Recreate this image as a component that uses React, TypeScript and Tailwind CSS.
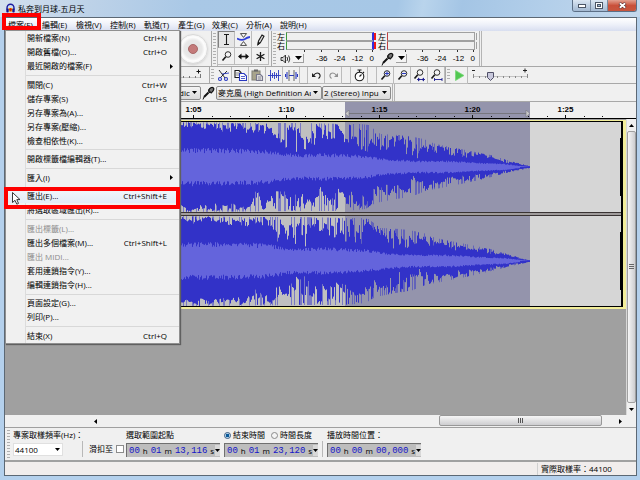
import React, { useState } from 'react';
import { clsx } from 'clsx';

type MenuEntry = { label: string; shortcut?: string; sub?: boolean; disabled?: boolean; active?: boolean } | null;

const menuBar = ['檔案(F)', '編輯(E)', '檢視(V)', '控制(R)', '軌道(T)', '產生(G)', '效果(C)', '分析(A)', '說明(H)'];

// null = separator
const fileMenu: MenuEntry[] = [
  { label: '開新檔案(N)', shortcut: 'Ctrl+N' },
  { label: '開啟舊檔(O)...', shortcut: 'Ctrl+O' },
  { label: '最近開啟的檔案(F)', sub: true },
  null,
  { label: '關閉(C)', shortcut: 'Ctrl+W' },
  { label: '儲存專案(S)', shortcut: 'Ctrl+S' },
  { label: '另存專案為(A)...' },
  { label: '另存專案(壓縮)...' },
  { label: '檢查相依性(K)...' },
  null,
  { label: '開啟標籤檔編輯器(T)...' },
  null,
  { label: '匯入(I)', sub: true },
  null,
  { label: '匯出(E)...', shortcut: 'Ctrl+Shift+E', active: true },
  { label: '將選取區域匯出(R)...' },
  null,
  { label: '匯出標籤(L)...', disabled: true },
  { label: '匯出多個檔案(M)...', shortcut: 'Ctrl+Shift+L' },
  { label: '匯出 MIDI...', disabled: true },
  { label: '套用連鎖指令(Y)...' },
  { label: '編輯連鎖指令(H)...' },
  null,
  { label: '頁面設定(G)...' },
  { label: '列印(P)...' },
  null,
  { label: '結束(X)', shortcut: 'Ctrl+Q' },
];

/* ---------- waveform ---------- */

type Points = [number, number][];

const upper: Points = [[0, 45], [60, 44], [120, 44], [165, 43], [180, 43], [188, 42], [200, 33], [218, 32], [228, 31], [243, 28], [255, 23], [285, 17], [310, 12], [330, 6], [345, 2], [350, 1]];
const lower: Points = [[0, 45], [130, 44], [165, 44], [185, 42], [195, 36], [215, 32], [230, 30], [245, 24], [265, 20], [290, 15], [315, 9], [335, 4], [350, 1]];
const upDips: Points = [[0, 0.16], [60, 0.22], [90, 0.3], [98, 0.6], [110, 0.55], [120, 0.75], [130, 0.65], [138, 0.35], [165, 0.55], [190, 0.65], [205, 0.5], [215, 0.65], [240, 0.75], [250, 0.45], [300, 0.45], [350, 0.4]];
const downDips: Points = [[0, 0.16], [65, 0.2], [74, 0.6], [84, 0.2], [95, 0.5], [108, 0.45], [118, 0.75], [128, 0.6], [165, 0.5], [182, 0.35], [195, 0.6], [240, 0.7], [260, 0.5], [350, 0.4]];
const rms: Points = [[0, 18], [70, 17], [90, 16], [105, 13], [125, 12], [140, 13], [165, 12], [185, 11], [205, 8], [235, 6], [270, 6], [300, 4], [325, 3], [340, 1], [350, 0]];

const at = (pts: Points, x: number) => {
  for (let i = 1; i < pts.length; i++) {
    const [x1, y1] = pts[i];
    const [x0, y0] = pts[i - 1];
    if (x <= x1) return y0 + ((y1 - y0) * (x - x0)) / (x1 - x0);
  }
  return pts[pts.length - 1][1];
};

const buildWave = (seed: number) => {
  let s = seed;
  const rnd = () => {
    s = (s * 16807) % 2147483647;
    return s / 2147483647;
  };
  let peak = '';
  let soft = '';
  let body = '';
  let a = 0.5;
  let b = 0.5;
  for (let x = 0; x < 350; x++) {
    // neighbouring columns partly share their level, so peaks come in clusters
    a = rnd() > 0.45 ? rnd() : a * 0.8 + rnd() * 0.2;
    b = rnd() > 0.45 ? rnd() : b * 0.8 + rnd() * 0.2;
    const u = at(upper, x);
    const l = at(lower, x);
    const up = u * (1 - at(upDips, x) * Math.pow(a, 1.3));
    const down = l * (1 - at(downDips, x) * Math.pow(b, 1.1));
    const r = at(rms, x);
    const px = x + 0.5;
    peak += `M${px} ${(45 - up).toFixed(1)}V${(45 + down).toFixed(1)}`;
    if (rnd() > 0.75) soft += `M${px} ${(45 - u).toFixed(1)}V${(45 + l).toFixed(1)}`;
    body += `M${px} ${(45 - r * (0.78 + rnd() * 0.3)).toFixed(1)}V${(45 + r * (0.78 + rnd() * 0.3)).toFixed(1)}`;
  }
  return { peak, soft, body };
};

const waves = [buildWave(4211), buildWave(90731)];

const Channel = ({ index }: { index: number }) => (
  <div className="flex h-[90px] bg-[#d6d6d6]">
    <div className="w-[175px] shrink-0 bg-[#c0c0c0]" />
    <svg width="350" height="90" viewBox="0 0 350 90" className="shrink-0" aria-hidden="true">
      <rect width="165" height="90" fill="#c0c0c0" />
      <rect x="165" width="185" height="90" fill="#9494ac" />
      <path d={waves[index].soft} stroke="#3232c8" strokeOpacity="0.5" />
      <path d={waves[index].peak} stroke="#3232c8" />
      <path d={waves[index].body} stroke="#6464dc" />
      <path d="M340 45.5H350" stroke="#3232c8" />
    </svg>
    <div className="flex flex-1 items-center justify-end">
      <div className="h-[58px] w-px bg-black" />
    </div>
  </div>
);

/* ---------- small parts ---------- */

const Grip = () => (
  <div className="flex w-[6px] shrink-0 flex-col items-center self-stretch border-l border-[#a8a8a8] bg-[#f0f0f0] py-[2px]">
    <div className="w-[3px] flex-1 bg-[repeating-linear-gradient(to_bottom,#b0b0b0_0_1px,#f0f0f0_1px_3px)]" />
  </div>
);

const Arrow = ({ className }: { className?: string }) => (
  <svg width="5" height="3" viewBox="0 0 5 3" className={className} aria-hidden="true">
    <path d="M0 0H5L2.5 3Z" fill="#000" />
  </svg>
);

const ToolButton = ({ label, active, children }: { label: string; active?: boolean; children: React.ReactNode }) => (
  <button
    aria-label={label}
    className={clsx(
      'flex h-[17px] w-[17px] shrink-0 items-center justify-center border-r border-b border-[#bcbcbc]',
      active ? 'border-t border-l border-t-[#808080] border-l-[#808080] bg-[#e6e6e6]' : 'bg-[#f1f1f1]',
    )}
  >
    <svg width="13" height="13" viewBox="0 0 13 13" fill="none" stroke="#1a1a1a" strokeWidth="1.1" className="shrink-0">
      {children}
    </svg>
  </button>
);

const Lens = () => (
  <>
    <circle cx="8" cy="4.5" r="2.8" fill="#f4f4f4" strokeWidth="0.9" />
    <path d="M5.8 6.8L2.5 10.5" strokeWidth="1.7" />
  </>
);

const MicIcon = () => (
  <svg width="13" height="14" viewBox="0 0 13 14" fill="none" stroke="#111" className="shrink-0" aria-hidden="true">
    <ellipse cx="9.2" cy="4" rx="2" ry="3" transform="rotate(40 9.2 4)" fill="#777" strokeWidth="1.2" />
    <path d="M6 3.6L10 7.4" strokeWidth="1" />
    <path d="M6.5 6.5L2 11" strokeWidth="2" />
    <path d="M2 11L1 13.5" strokeWidth="1" />
  </svg>
);

const Meter = ({ kind }: { kind: 'play' | 'record' }) => (
  <div className="flex w-[101px] shrink-0 flex-col pt-[1px]">
    <div className="flex">
      <p className="w-[9px] text-[8px] leading-[9px]">
        左
        <br />
        右
      </p>
      <div>
        {[0, 1].map((row) => (
          <div key={row} className="flex h-[9px] items-center">
            <div
              className={clsx(
                'h-[9px] w-[88px] border-t border-b border-l border-[#a0a0a0] bg-[#efefef]',
                kind === 'play' ? 'border-r-2 border-l-[#3c9a3c] border-r-[#3030e0]' : 'border-r border-l-[#c04040]',
              )}
            />
            {kind === 'play' ? <div className="h-[7px] w-[2px] bg-[#f01818]" /> : <div className="h-[7px] w-[2px] border-r border-[#a0a0a0]" />}
          </div>
        ))}
      </div>
    </div>
    <svg width="100" height="2" viewBox="0 0 100 2" aria-hidden="true">
      <path d="M27.5 0V2M44.5 0V2M61.5 0V2M79.5 0V2M95.5 0V2" stroke="#333" />
    </svg>
    <div className="flex h-[13px] items-center pr-[4px] pl-[3px]">
      {kind === 'play' ? (
        <svg width="11" height="10" viewBox="0 0 11 10" fill="none" stroke="#333" strokeWidth="1" aria-hidden="true">
          <path d="M1 3.5H3L5.5 1V9L3 6.5H1Z" fill="#ccc" />
          <path d="M7 3Q8.3 5 7 7M8.6 1.5Q11 5 8.6 8.5" />
        </svg>
      ) : (
        <MicIcon />
      )}
      <button
        aria-label={kind === 'play' ? '輸出音量表' : '輸入音量表'}
        className="ml-[2px] flex h-[9px] w-[11px] items-center justify-center border-r border-b border-[#a0a0a0] bg-[#f4f4f4]"
      >
        <svg width="7" height="4" viewBox="0 0 7 4">
          <path d="M0 0H7L3.5 4Z" fill="#000" />
        </svg>
      </button>
      <div className="ml-auto flex w-[58px] justify-between font-['Liberation_Sans',sans-serif] text-[8px] leading-[10px]">
        <span>-36</span>
        <span>-24</span>
        <span>-12</span>
        <span>0</span>
      </div>
    </div>
  </div>
);

const Combo = ({ label, value, className }: { label: string; value: string; className: string }) => (
  <div className={clsx('relative flex h-[14px] shrink-0 items-center', className)}>
    <select
      aria-label={label}
      className="h-full w-full appearance-none overflow-hidden rounded-[2px] border border-[#8c8c8c] bg-linear-to-b from-[#f4f4f4] to-[#dadada] pr-[10px] pl-[1px] text-[8px] leading-[12px] text-black"
    >
      <option>{value}</option>
    </select>
    <Arrow className="pointer-events-none absolute right-[4px]" />
  </div>
);

const TimeBox = ({ h, m, s, label }: { h: string; m: string; s: string; label: string }) => (
  <div
    role="group"
    aria-label={label}
    className="flex h-[14px] w-[94px] items-center border-t border-l border-[#707070] bg-[#bdbdbd] pl-[2px] text-[8px] leading-[12px]"
  >
    <div className="flex items-center gap-[3px]">
      <span className="font-['Liberation_Mono',monospace] text-[9px] text-[#1414c8]">{h}</span>
      <span>h</span>
      <span className="font-['Liberation_Mono',monospace] text-[9px] text-[#1414c8]">{m}</span>
      <span>m</span>
      <span className="font-['Liberation_Mono',monospace] text-[9px] text-[#1414c8]">{s}</span>
      <span>s</span>
    </div>
    <button aria-label={label + ' 格式'} className="ml-auto flex h-[11px] w-[5px] shrink-0 items-center justify-center bg-[#d8d8d8]">
      <Arrow />
    </button>
  </div>
);

/* ---------- window sections ---------- */

const TitleBar = () => (
  <header className="flex h-[17px] items-start bg-[linear-gradient(100deg,#d3e0ee_0%,#bdd2e8_14%,#a9c8e6_30%,#a6c7e6_62%,#b9d4ec_66%,#a4c5e5_72%,#b3cfea_85%,#c4d8ec_100%)] pr-[3px] pl-[6px]">
    <svg width="9" height="11" viewBox="0 0 9 11" className="mt-[3px]" aria-hidden="true">
      <path d="M1 6.5V5A3.5 3.8 0 0 1 8 5V6.5" fill="none" stroke="#1a1aa0" strokeWidth="1.4" />
      <rect x="2.6" y="5" width="3.8" height="3.6" fill="#f39a12" />
      <path d="M3 6.5L4.5 5L6 6.5L4.5 8.4Z" fill="#d02000" />
      <rect x="0.3" y="5.4" width="2.4" height="4.2" rx="1" fill="#15158c" />
      <rect x="6.3" y="5.4" width="2.4" height="4.2" rx="1" fill="#15158c" />
    </svg>
    <h1 className="ml-[3px] flex-1 text-[8px] leading-[17px]">私奔到月球-五月天</h1>
    <div className="flex h-[12px] overflow-hidden rounded-b-[3px] border border-t-0 border-[#5c6f86]">
      <button aria-label="最小化" className="flex w-[18px] items-center justify-center border-r border-[#7a8ca2] bg-linear-to-b from-[#dbe6f2] to-[#a3b9d2]">
        <svg width="8" height="5" viewBox="0 0 8 5">
          <rect x="0.5" y="1.5" width="7" height="3" fill="#fff" stroke="#4c5666" />
        </svg>
      </button>
      <button aria-label="最大化" className="flex w-[17px] items-center justify-center border-r border-[#7a8ca2] bg-linear-to-b from-[#dbe6f2] to-[#a3b9d2]">
        <svg width="8" height="7" viewBox="0 0 8 7">
          <rect x="0.5" y="0.5" width="7" height="6" fill="#fff" stroke="#4c5666" />
          <rect x="2.5" y="2.5" width="3" height="2" fill="#a3b9d2" stroke="#4c5666" />
        </svg>
      </button>
      <button aria-label="關閉" className="flex w-[28px] items-center justify-center bg-linear-to-b from-[#e2a090] via-[#c9503a] to-[#c8563e]">
        <svg width="9" height="7" viewBox="0 0 9 7">
          <path d="M1.5 1L7.5 6M7.5 1L1.5 6" stroke="#5a2a2a" strokeWidth="3" />
          <path d="M1.8 1.2L7.2 5.8M7.2 1.2L1.8 5.8" stroke="#fff" strokeWidth="1.8" />
        </svg>
      </button>
    </div>
  </header>
);

const ToolBars = () => (
  <>
    {/* Transport, tools, meters */}
    <div className="flex h-[36px] border-b border-[#a8a8a8]">
      <div className="flex w-[206px] shrink-0 items-center justify-end pr-[3px]">
        <button aria-label="錄音" className="flex h-[30px] w-[30px] items-center justify-center rounded-full border border-[#d8d8d8] bg-[radial-gradient(circle,#e4e4e4_0%,#e8e8e8_45%,#fdfdfd_60%,#dadada_100%)] shadow-sm">
          <span className="h-[10px] w-[10px] rounded-full border border-[#a86868] bg-[#c47a7a]" />
        </button>
      </div>
      <Grip />
      <div className="mr-[2px] grid shrink-0 grid-cols-3 content-start border-l border-[#bcbcbc]">
        <ToolButton label="選取工具" active>
          <path d="M4 1.5H9M6.5 1.5V11.5M4 11.5H9" />
        </ToolButton>
        <ToolButton label="波封工具">
          <path d="M3.5 0.6H9.5L6.5 4.4ZM3.5 12.4H9.5L6.5 8.6Z" fill="#fff" strokeWidth="0.8" />
          <path d="M0 5.5Q5 8 8 6Q10 4.5 13 4" stroke="#3040d8" strokeWidth="1.8" />
        </ToolButton>
        <ToolButton label="繪製工具">
          <path d="M4 11.5L4.5 8L8 2L10 3.2L6.5 9.5Z" fill="#ddd" />
          <path d="M4 11.5L4.3 9.5L5.6 10.2Z" fill="#000" />
        </ToolButton>
        <ToolButton label="縮放工具">
          <Lens />
        </ToolButton>
        <ToolButton label="時間移動工具">
          <path d="M2 6.5H11" strokeWidth="1.6" />
          <path d="M1 6.5L4.5 3.5V9.5ZM12 6.5L8.5 3.5V9.5Z" fill="#111" stroke="none" />
        </ToolButton>
        <ToolButton label="多功能工具">
          <path d="M6.5 2V11M2.6 4.2L10.4 8.8M10.4 4.2L2.6 8.8" strokeWidth="1.3" />
        </ToolButton>
      </div>
      <Grip />
      <Meter kind="play" />
      <Meter kind="record" />
      <div className="w-[3px] border-r border-l border-[#b4b4b4]" />
    </div>

    {/* Mixer, edit, transcription */}
    <div className="flex h-[17px] border-b border-[#a8a8a8]">
      <div className="flex w-[204px] shrink-0 justify-end pr-[5px]">
        <svg width="28" height="16" viewBox="0 0 28 16" stroke="#777" aria-hidden="true">
          <path d="M20.5 4.5H24.5M22.5 2.5V6.5" stroke="#111" />
          <path d="M0 10.5H25" stroke="#c4c4c4" />
          <path d="M1.5 9V11M7.5 9V11M13.5 9V11M19.5 9V11M24.5 7V11" />
        </svg>
      </div>
      <Grip />
      <ToolButton label="剪下">
        <path d="M2 1L8 9M10 2L3 9" strokeWidth="0.9" />
        <circle cx="3" cy="10" r="1.5" stroke="#2838c0" />
        <circle cx="9" cy="10" r="1.5" stroke="#2838c0" />
        <path d="M5 5L12 4" stroke="#2838c0" strokeWidth="0.9" />
      </ToolButton>
      <ToolButton label="複製">
        <path d="M1 1.5H5L7 3.5V8.5H1Z" fill="#fff" />
        <path d="M2 4H6M2 6H6" stroke="#666" strokeWidth="0.8" />
        <path d="M5.5 4.5H10L12.5 7V11.5H5.5Z" fill="#fff" stroke="#2838c0" />
        <path d="M7 7.5H11M7 9.5H11" stroke="#2838c0" strokeWidth="0.8" />
      </ToolButton>
      <ToolButton label="貼上">
        <rect x="1" y="2" width="8" height="9" fill="#a8a48c" stroke="#85857c" />
        <path d="M3 1.5H7" stroke="#666" strokeWidth="2" />
        <path d="M5.5 5.5H9.5L11.5 7.5V11.5H5.5Z" fill="#ddd" stroke="#77778c" />
        <path d="M7 8H10M7 10H10" stroke="#77778c" strokeWidth="0.8" />
      </ToolButton>
      <ToolButton label="修剪">
        <path d="M0 6.5H13M2.5 1V12M10.5 1V12M4.5 4V9M6.5 3V10M8.5 4V9" stroke="#2838c0" strokeWidth="0.9" />
      </ToolButton>
      <ToolButton label="靜音">
        <path d="M0.5 5V8M2 3V10M4 6.5H9M11 3V10M12.5 5V8" stroke="#2838c0" />
        <path d="M4 1V12M9 1V12" stroke="#555" strokeWidth="0.9" />
      </ToolButton>
      <div className="w-[8px] shrink-0 border-r border-[#bcbcbc]" />
      <ToolButton label="復原">
        <path d="M3.5 6.5Q6 3 9 4.5Q11.5 7 8.5 9.5" />
        <path d="M2 4V8H6Z" fill="#222" stroke="none" />
      </ToolButton>
      <ToolButton label="重做">
        <g stroke="#909090">
          <path d="M9.5 6.5Q7 3 4 4.5Q1.5 7 4.5 9.5" />
          <path d="M11 4V8H7Z" fill="#909090" stroke="none" />
        </g>
      </ToolButton>
      <div className="w-[9px] shrink-0 border-r border-[#bcbcbc]" />
      <ToolButton label="同步鎖定">
        <circle cx="6.5" cy="7.5" r="4.3" fill="#fff" />
        <path d="M6.5 7.5L8.5 5.5M6.5 3V0.5M4.5 1H8.5M10 3L11 4" />
      </ToolButton>
      <div className="w-[9px] shrink-0 border-r border-[#bcbcbc]" />
      <ToolButton label="放大">
        <Lens />
        <path d="M6 4.5H10M8 2.5V6.5" stroke="#2838c0" />
      </ToolButton>
      <ToolButton label="縮小">
        <Lens />
        <path d="M6 4.5H10" stroke="#2838c0" />
      </ToolButton>
      <ToolButton label="符合選取範圍">
        <circle cx="7" cy="3.5" r="2.8" fill="#f4f4f4" strokeWidth="0.9" />
        <path d="M4.8 5.8L1.5 9.5" strokeWidth="1.7" />
        <path d="M4 10.5H12" stroke="#1c1c90" strokeWidth="0.9" />
        <path d="M5 8.5L7.5 10.5L5 12.5ZM11 8.5L8.5 10.5L11 12.5Z" fill="#1c1c90" stroke="none" />
      </ToolButton>
      <ToolButton label="符合專案">
        <circle cx="7" cy="3.5" r="2.8" fill="#f4f4f4" strokeWidth="0.9" />
        <path d="M4.8 5.8L1.5 9.5" strokeWidth="1.7" />
        <path d="M4.5 10.5H12M4.5 9V12M12 9V12" stroke="#1c1c90" strokeWidth="0.9" />
      </ToolButton>
      <Grip />
      <ToolButton label="播放">
        <path d="M2.5 1.5L11 6.5L2.5 11.5Z" fill="#52c852" stroke="#7ad67a" strokeWidth="0.8" />
      </ToolButton>
      <div className="relative ml-[3px] w-[60px] shrink-0">
        <svg width="60" height="16" viewBox="0 0 60 16" stroke="#888" aria-hidden="true">
          <path d="M1 3.5H4M52 3.5H56M54 1.5V5.5" stroke="#222" />
          <path d="M2 9.5H57" stroke="#c4c4c4" />
          <path d="M2.5 7V11M8.5 9V11M14.5 9V11M20.5 9V11M26.5 9V11M32.5 9V11M38.5 9V11M44.5 9V11M50.5 9V11M56.5 7V11" />
          <path d="M16.5 5.5H22.5V10.5L19.5 13.5L16.5 10.5Z" fill="#c8c8dc" stroke="#505068" />
        </svg>
        <input type="range" aria-label="播放速度" defaultValue={30} className="absolute inset-0 h-full w-full cursor-pointer appearance-none bg-transparent opacity-0" />
      </div>
    </div>

    {/* Devices */}
    <div className="flex h-[18px] items-center border-b border-[#a8a8a8]">
      <div className="flex w-[196px] shrink-0 justify-end">
        <Combo label="輸出裝置" value="dic" className="w-[24px]" />
      </div>
      <div className="flex w-[15px] shrink-0 justify-center">
        <MicIcon />
      </div>
      <Combo label="輸入裝置" value="麥克風 (High Definition Au" className="w-[106px]" />
      <Combo label="輸入聲道" value="2 (Stereo) Inpu" className="w-[69px]" />
      <div className="ml-[1px] w-[3px] self-stretch border-r border-l border-[#b4b4b4]" />
    </div>
  </>
);

const Ruler = () => (
  <div className="relative flex h-[17px] border-b border-black bg-[#f0f0f0] pl-[142px]">
    <div className="absolute top-0 left-[340px] flex h-full w-[185px] items-end bg-[#9494ac] pb-[1px]">
      <svg width="185" height="7" viewBox="0 0 185 7" aria-hidden="true">
        <path d="M4 3.5H181" stroke="#77777f" />
        <path d="M0 3.5L4 0V7ZM185 3.5L181 0V7Z" fill="#c8c8c8" stroke="#77777f" strokeWidth="0.6" />
      </svg>
    </div>
    {['1:05', '1:10', '1:15', '1:20', '1:25'].map((t) => (
      <div key={t} className="relative flex w-[93px] flex-col items-center justify-between pt-[3px]">
        <span className="font-['Liberation_Sans',sans-serif] text-[8px] leading-[10px] font-bold">{t}</span>
        <svg width="93" height="3" viewBox="0 0 93 3" aria-hidden="true">
          <path d="M46.5 0V3M9.5 1V2M28.5 1V2M65.5 1V2M83.5 1V2" stroke="#111" />
        </svg>
      </div>
    ))}
  </div>
);

const Workspace = () => (
  <main className="flex flex-1 bg-[#a0a0a0]">
    <div className="flex-1">
      <div className="border-t border-[#a0a0a0] bg-[#f2ee9a] pt-[1px] pr-[3px] pb-[2px]">
        <div className="flex flex-col border-t border-r-2 border-b border-black">
          <Channel index={0} />
          <div className="h-[4px] border-t border-b border-[#3a3434] bg-[#a09c9c]" />
          <Channel index={1} />
        </div>
      </div>
    </div>
    <div className="flex w-[10px] flex-col items-center border-l border-[#d8d8d8] bg-[#f0f0f0]">
      <button aria-label="向上捲動" className="flex h-[12px] w-full items-center justify-center">
        <Arrow className="rotate-180" />
      </button>
      <div className="flex w-full flex-1 items-center justify-center rounded-[2px] border border-[#a0a0a0] bg-linear-to-r from-[#f6f6f6] to-[#cdcdd0]">
        <svg width="5" height="6" viewBox="0 0 5 6" stroke="#666" aria-hidden="true">
          <path d="M0 0.5H5M0 2.5H5M0 4.5H5" />
        </svg>
      </div>
      <button aria-label="向下捲動" className="flex h-[12px] w-full items-center justify-center">
        <Arrow />
      </button>
    </div>
  </main>
);

const HScroll = () => (
  <div className="flex h-[12px] items-center bg-[#f0f0f0] pr-[10px] pl-[85px]">
    <button aria-label="向左捲動" className="flex h-full w-[11px] items-center justify-center">
      <Arrow className="rotate-90" />
    </button>
    <div className="flex h-full flex-1 justify-end pr-[13px]">
      <div className="flex h-[11px] w-[163px] items-center justify-center rounded-[2px] border border-[#989898] bg-linear-to-b from-[#f6f6f6] to-[#cdcdd0]">
        <svg width="6" height="5" viewBox="0 0 6 5" stroke="#555" aria-hidden="true">
          <path d="M0.5 0V5M2.5 0V5M4.5 0V5" />
        </svg>
      </div>
    </div>
    <button aria-label="向右捲動" className="flex h-full w-[11px] items-center justify-center">
      <Arrow className="-rotate-90" />
    </button>
  </div>
);

const SelectionBar = () => {
  const [mode, setMode] = useState('end');
  const radio =
    'h-[7px] w-[7px] appearance-none rounded-full border border-[#8a8a8a] bg-[#f4f4f4] checked:border-[#3a5a80] checked:bg-[radial-gradient(circle,#0a5a9a_40%,#cfe8f8_60%)]';

  return (
    <div className="flex h-[35px] border-t border-b-2 border-[#a0a0a0] bg-[#f0f0f0] text-[8px] leading-[12px]">
      <div className="w-[8px] shrink-0">
        <div className="mx-[2px] my-[2px] h-[28px] w-[3px] bg-[repeating-linear-gradient(to_bottom,#b0b0b0_0_1px,#f0f0f0_1px_3px)]" />
      </div>
      <div className="flex w-[69px] shrink-0 flex-col gap-[2px] pt-[1px]">
        <label htmlFor="rate" className="whitespace-nowrap">專案取樣頻率(Hz)：</label>
        <div className="relative flex h-[13px] w-[50px] items-center">
          <select id="rate" className="h-full w-full appearance-none border border-[#e0e0e0] bg-white pl-[1px] text-[8px] leading-[11px]">
            <option>44100</option>
          </select>
          <Arrow className="pointer-events-none absolute right-[3px]" />
        </div>
      </div>
      <div className="mt-[13px] flex h-[16px] w-[44px] shrink-0 items-center gap-[3px] border-l border-[#b8b8b8] pl-[6px]">
        <label htmlFor="snap" className="whitespace-nowrap">滑扣至</label>
        <input id="snap" type="checkbox" className="h-[8px] w-[8px] shrink-0 appearance-none border border-[#8c8c8c] bg-white" />
      </div>
      <div className="flex w-[98px] shrink-0 flex-col gap-[2px] pt-[1px]">
        <span>選取範圍起點</span>
        <TimeBox h="00" m="01" s="13,116" label="選取範圍起點" />
      </div>
      <div className="flex w-[98px] shrink-0 flex-col gap-[2px] pt-[1px]">
        <div className="flex items-center gap-[6px] whitespace-nowrap">
          <label className="flex items-center gap-[2px]">
            <input type="radio" name="mode" checked={mode === 'end'} onChange={() => setMode('end')} className={radio} />
            結束時間
          </label>
          <label className="flex items-center gap-[2px]">
            <input type="radio" name="mode" checked={mode === 'length'} onChange={() => setMode('length')} className={radio} />
            時間長度
          </label>
        </div>
        <TimeBox h="00" m="01" s="23,120" label="結束時間" />
      </div>
      <div className="mt-[13px] h-[16px] w-[5px] shrink-0 border-l border-[#b8b8b8]" />
      <div className="flex flex-col gap-[2px] pt-[1px]">
        <span>播放時間位置：</span>
        <TimeBox h="00" m="00" s="00,000" label="播放時間位置" />
      </div>
    </div>
  );
};

const FileMenu = () => (
  <ul className="absolute top-[30px] left-[5px] z-10 flex h-[314px] w-[175px] flex-col border border-[#909090] bg-[linear-gradient(to_right,#f0f0f0_0_19px,#dcdcdc_19px_20px,#f1f1f1_20px)] text-[8px] shadow-[1px_1px_1px_#606060]">
    {fileMenu.map((item, i) =>
      item === null ? (
        <li key={i} className="flex flex-1 items-center pl-[20px]">
          <div className="h-px w-full bg-[#d8d8d8]" />
        </li>
      ) : (
        <li key={i}>
          <button
            disabled={item.disabled}
            className={clsx(
              'flex h-[14px] w-full items-center pr-[12px] pl-[21px] leading-[14px]',
              item.disabled ? 'text-[#8c8c8c]' : 'text-black',
              item.active && 'bg-linear-to-b from-[#f3f6fa] to-[#e2ebf6]',
            )}
          >
            <span className="flex-1 text-left">{item.label}</span>
            {item.shortcut && <span>{item.shortcut}</span>}
            {item.sub && (
              <svg width="3" height="5" viewBox="0 0 3 5" className="-mr-[6px]">
                <path d="M0 0V5L3 2.5Z" fill="#000" />
              </svg>
            )}
          </button>
        </li>
      ),
    )}
  </ul>
);

export default function App() {
  return (
    <div className="flex min-h-screen flex-col bg-[#b4d0ec] font-['Open_Sans','Noto_Sans_CJK_TC',sans-serif] text-black">
      <TitleBar />
      <div className="mr-[3px] mb-[4px] ml-[4px] flex flex-1 flex-col border border-[#5c6874] bg-[#f0f0f0]">
        <nav className="flex h-[13px] shrink-0 items-center gap-[9px] bg-linear-to-b from-white via-[#eef1f9] to-[#d8def0] pl-[3px]">
          {menuBar.map((name) => (
            <button key={name} className="w-[25px] text-left text-[8px] leading-[12px] whitespace-nowrap">
              {name}
            </button>
          ))}
        </nav>
        <ToolBars />
        <Ruler />
        <Workspace />
        <HScroll />
        <SelectionBar />
        <footer className="flex h-[13px] items-center justify-end bg-[#f1edec] text-[8px] leading-[12px]">
          <span className="w-[99px] border-l border-[#d0d0d0] pl-[3px]">實際取樣率：44100</span>
        </footer>
      </div>

      <FileMenu />

      {/* Step highlights and pointer */}
      <div className="pointer-events-none absolute top-[13px] left-[2px] z-20 h-[17px] w-[39px] border-4 border-[#fe0000]" />
      <div className="pointer-events-none absolute top-[187px] left-[4px] z-20 h-[22px] w-[176px] border-4 border-[#fe0000]" />
      <svg width="9" height="13" viewBox="0 0 9 13" className="pointer-events-none absolute top-[192px] left-[12px] z-30" aria-hidden="true">
        <path d="M0.5 0.5V10.5L3 8.3L4.8 12.2L6.5 11.4L4.8 7.6H8Z" fill="#fff" stroke="#222" strokeWidth="0.9" />
      </svg>
    </div>
  );
}
